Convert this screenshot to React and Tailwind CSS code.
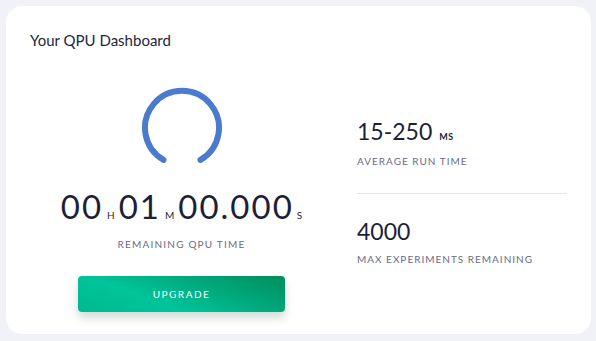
export default function App() {
  return (
    <div className="h-[341px] w-[596px] bg-[#f1f2f8] p-[6px] pr-[5px] pb-[7px] font-['Lato',sans-serif]">
      <div className="flex h-full w-full flex-col rounded-[16px] bg-white pl-[24px] pr-[24px] pt-[25px]">
        <h1 className="text-[15px] leading-[18px] text-[#24263c]">Your QPU Dashboard</h1>
        <div className="flex flex-1">
          <div className="flex w-[303px] flex-col items-center pt-[38px]">
            <svg width="84" height="80" viewBox="0 0 84 80">
              <path
                d="M 23.5 72.9 A 37 37 0 1 1 60.5 72.9"
                fill="none"
                stroke="#4a7bcf"
                strokeWidth="6"
                strokeLinecap="round"
              />
            </svg>
            <div className="mt-[22px] flex items-baseline text-[#1d1f38]">
              <span className="text-[33px] leading-[34px] tracking-[2px]">00</span>
              <span className="mx-[4px] text-[10px]">H</span>
              <span className="text-[33px] leading-[34px] tracking-[2px]">01</span>
              <span className="mx-[4px] text-[10px]">M</span>
              <span className="text-[33px] leading-[34px] tracking-[2px]">00.000</span>
              <span className="ml-[3px] text-[10px]">S</span>
            </div>
            <div className="mt-[14px] text-[10px] tracking-[1.2px] text-[#6a6c83]">REMAINING QPU TIME</div>
            <button className="mt-[24px] h-[36px] w-[207px] rounded-[4px] bg-[linear-gradient(20deg,#00b98d_0%,#00c49a_35%,#00a578_70%,#008d5c_100%)] text-[10px] tracking-[1.5px] text-white shadow-[0_6px_10px_rgba(0,60,40,0.18)]">
              UPGRADE
            </button>
          </div>
          <div className="ml-[24px] flex w-[210px] flex-col pt-[68px]">
            <div className="flex items-baseline text-[#1d1f38]">
              <span className="text-[23px] leading-[28px]">15-250</span>
              <span className="ml-[7px] text-[9px] font-bold tracking-[0.5px]">MS</span>
            </div>
            <div className="mt-[9px] text-[10px] tracking-[1px] text-[#6a6c83]">AVERAGE RUN TIME</div>
            <div className="mt-[24px] h-px w-full bg-[#e3e4ec]" />
            <div className="mt-[23px] text-[23px] leading-[28px] text-[#1d1f38]">4000</div>
            <div className="mt-[7px] text-[10px] tracking-[1px] text-[#6a6c83]">MAX EXPERIMENTS REMAINING</div>
          </div>
        </div>
      </div>
    </div>
  );
}
